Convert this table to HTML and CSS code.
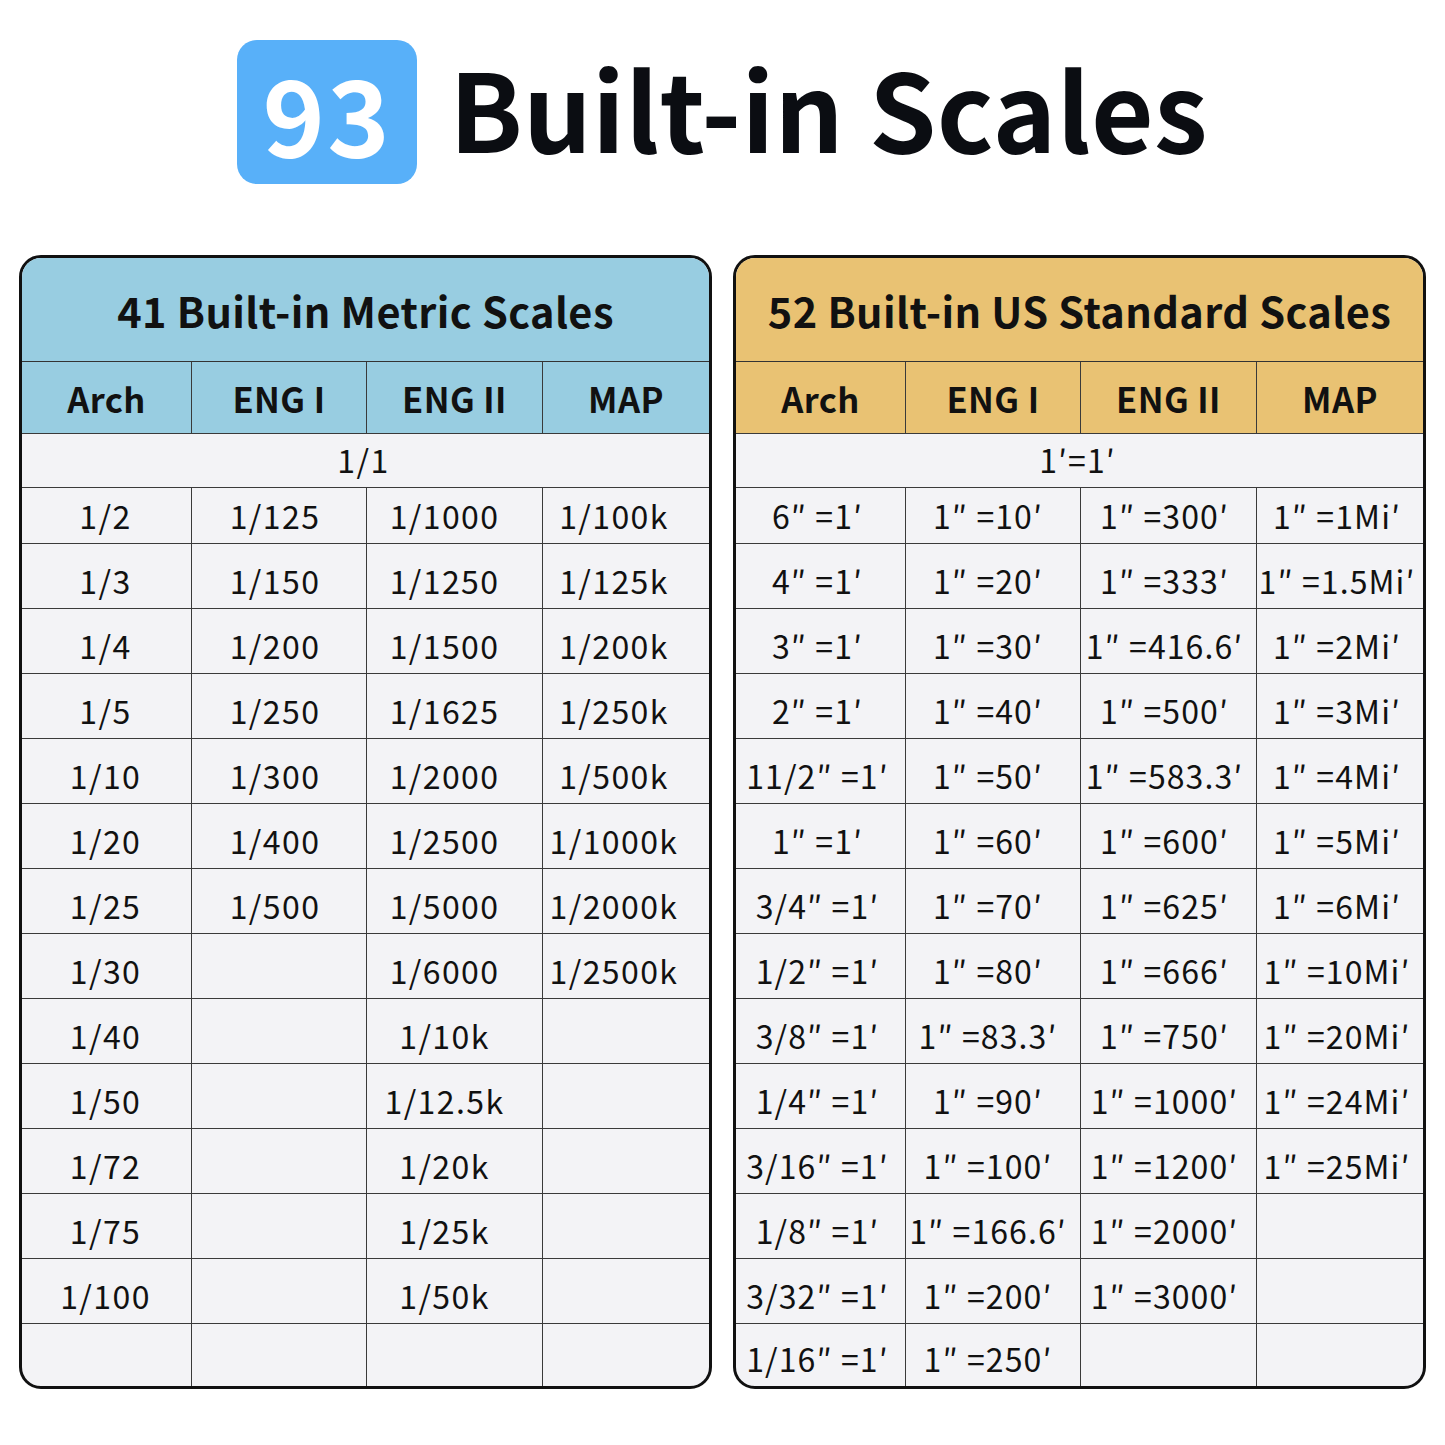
FILE: index.html
```html
<!DOCTYPE html>
<html>
<head>
<meta charset="utf-8">
<link rel="stylesheet" href="styles.css">
</head>
<body>
<div class="page">
  <header class="hero">
    <div class="badge">93</div>
    <h1 class="hero-title">Built-in Scales</h1>
  </header>
  <main class="tables">
    <section class="card card-metric">
      <div class="card-title">41 Built-in Metric Scales</div>
      <div class="grid">
        <div class="cell head">Arch</div><div class="cell head">ENG I</div><div class="cell head">ENG II</div><div class="cell head last">MAP</div>
        <div class="cell span">1/1</div>
        <div class="cell">1/2</div><div class="cell">1/125</div><div class="cell">1/1000</div><div class="cell last">1/100k</div>
        <div class="cell">1/3</div><div class="cell">1/150</div><div class="cell">1/1250</div><div class="cell last">1/125k</div>
        <div class="cell">1/4</div><div class="cell">1/200</div><div class="cell">1/1500</div><div class="cell last">1/200k</div>
        <div class="cell">1/5</div><div class="cell">1/250</div><div class="cell">1/1625</div><div class="cell last">1/250k</div>
        <div class="cell">1/10</div><div class="cell">1/300</div><div class="cell">1/2000</div><div class="cell last">1/500k</div>
        <div class="cell">1/20</div><div class="cell">1/400</div><div class="cell">1/2500</div><div class="cell last">1/1000k</div>
        <div class="cell">1/25</div><div class="cell">1/500</div><div class="cell">1/5000</div><div class="cell last">1/2000k</div>
        <div class="cell">1/30</div><div class="cell"></div><div class="cell">1/6000</div><div class="cell last">1/2500k</div>
        <div class="cell">1/40</div><div class="cell"></div><div class="cell">1/10k</div><div class="cell last"></div>
        <div class="cell">1/50</div><div class="cell"></div><div class="cell">1/12.5k</div><div class="cell last"></div>
        <div class="cell">1/72</div><div class="cell"></div><div class="cell">1/20k</div><div class="cell last"></div>
        <div class="cell">1/75</div><div class="cell"></div><div class="cell">1/25k</div><div class="cell last"></div>
        <div class="cell">1/100</div><div class="cell"></div><div class="cell">1/50k</div><div class="cell last"></div>
        <div class="cell bottom"></div><div class="cell bottom"></div><div class="cell bottom"></div><div class="cell bottom last"></div>
      </div>
    </section>
    <section class="card card-us">
      <div class="card-title">52 Built-in US Standard Scales</div>
      <div class="grid">
        <div class="cell head">Arch</div><div class="cell head">ENG I</div><div class="cell head">ENG II</div><div class="cell head last">MAP</div>
        <div class="cell span">1′=1′</div>
        <div class="cell">6″ =1′</div><div class="cell">1″ =10′</div><div class="cell">1″ =300′</div><div class="cell last">1″ =1Mi′</div>
        <div class="cell">4″ =1′</div><div class="cell">1″ =20′</div><div class="cell">1″ =333′</div><div class="cell last">1″ =1.5Mi′</div>
        <div class="cell">3″ =1′</div><div class="cell">1″ =30′</div><div class="cell">1″ =416.6′</div><div class="cell last">1″ =2Mi′</div>
        <div class="cell">2″ =1′</div><div class="cell">1″ =40′</div><div class="cell">1″ =500′</div><div class="cell last">1″ =3Mi′</div>
        <div class="cell">11/2″ =1′</div><div class="cell">1″ =50′</div><div class="cell">1″ =583.3′</div><div class="cell last">1″ =4Mi′</div>
        <div class="cell">1″ =1′</div><div class="cell">1″ =60′</div><div class="cell">1″ =600′</div><div class="cell last">1″ =5Mi′</div>
        <div class="cell">3/4″ =1′</div><div class="cell">1″ =70′</div><div class="cell">1″ =625′</div><div class="cell last">1″ =6Mi′</div>
        <div class="cell">1/2″ =1′</div><div class="cell">1″ =80′</div><div class="cell">1″ =666′</div><div class="cell last">1″ =10Mi′</div>
        <div class="cell">3/8″ =1′</div><div class="cell">1″ =83.3′</div><div class="cell">1″ =750′</div><div class="cell last">1″ =20Mi′</div>
        <div class="cell">1/4″ =1′</div><div class="cell">1″ =90′</div><div class="cell">1″ =1000′</div><div class="cell last">1″ =24Mi′</div>
        <div class="cell">3/16″ =1′</div><div class="cell">1″ =100′</div><div class="cell">1″ =1200′</div><div class="cell last">1″ =25Mi′</div>
        <div class="cell">1/8″ =1′</div><div class="cell">1″ =166.6′</div><div class="cell">1″ =2000′</div><div class="cell last"></div>
        <div class="cell">3/32″ =1′</div><div class="cell">1″ =200′</div><div class="cell">1″ =3000′</div><div class="cell last"></div>
        <div class="cell bottom">1/16″ =1′</div><div class="cell bottom">1″ =250′</div><div class="cell bottom"></div><div class="cell bottom last"></div>
      </div>
    </section>
  </main>
</div>
</body>
</html>
```
FILE: styles.css
```css
* { box-sizing: border-box; }
html, body { margin: 0; padding: 0; background: #ffffff; }
body { font-family: "Noto Sans CJK SC", "Noto Sans", sans-serif; color: #111111; }
.page { width: 1445px; height: 1445px; padding-top: 40px; }
.hero { display: flex; align-items: flex-start; justify-content: center; gap: 32px; height: 144px; }
.badge {
  width: 180px; height: 144px; border-radius: 20px; background: #58b0f9;
  color: #ffffff; font-weight: 700; font-size: 106px; line-height: 144px; text-align: center; letter-spacing: 2px;
}
.hero-title { margin: 0; font-size: 108px; font-weight: 700; line-height: 144px; margin-top: -6px; color: #0b0d12; letter-spacing: 0.3px; }
.tables { display: flex; gap: 21px; padding: 0 19px; margin-top: 71px; }
.card {
  width: 693px; height: 1134px; border: 3px solid #111111; border-radius: 22px; overflow: hidden;
  background: #f3f3f6; display: flex; flex-direction: column;
}
.card-metric .card-title, .card-metric .head { background: #98cde1; }
.card-us .card-title, .card-us .head { background: #e9c273; }
.card-title {
  height: 104px; display: flex; align-items: center; justify-content: center;
  font-size: 41.5px; font-weight: 700; letter-spacing: 0.4px; border-bottom: 1.5px solid #333;
}
.grid {
  flex: 1; display: grid; grid-template-columns: 170px 175px 176px 1fr;
  grid-template-rows: 72px 54px 56px repeat(12, 65px) 1fr;
}
.cell {
  display: flex; align-items: flex-end; justify-content: center; padding-bottom: 12px;
  font-size: 32px; line-height: 32px; border-right: 1.5px solid #3a3a3a; border-bottom: 1.5px solid #3a3a3a;
  white-space: nowrap; letter-spacing: 1.4px;
}
.card-us .cell { letter-spacing: 1.1px; }
.cell.last { border-right: none; }
.cell.bottom { border-bottom: none; }
.cell.head { align-items: center; padding-bottom: 0; font-weight: 700; font-size: 34.5px; letter-spacing: 0.4px; }
.cell.span { grid-column: 1 / 5; border-right: none; padding-right: 4px; }

.card-metric .cell:nth-child(4n+6) { padding-right: 2px; }
.card-metric .cell:nth-child(4n+7) { padding-right: 8px; }
.card-metric .cell:nth-child(4n+8) { padding-right: 20px; }
.card-metric .cell:nth-child(4n+9) { padding-right: 24px; }
.card-us .cell:nth-child(4n+6) { padding-right: 6px; }
.card-us .cell:nth-child(4n+7) { padding-right: 10px; }
.card-us .cell:nth-child(4n+8) { padding-right: 8px; }
.card-us .cell:nth-child(4n+9) { padding-right: 6px; }
```
